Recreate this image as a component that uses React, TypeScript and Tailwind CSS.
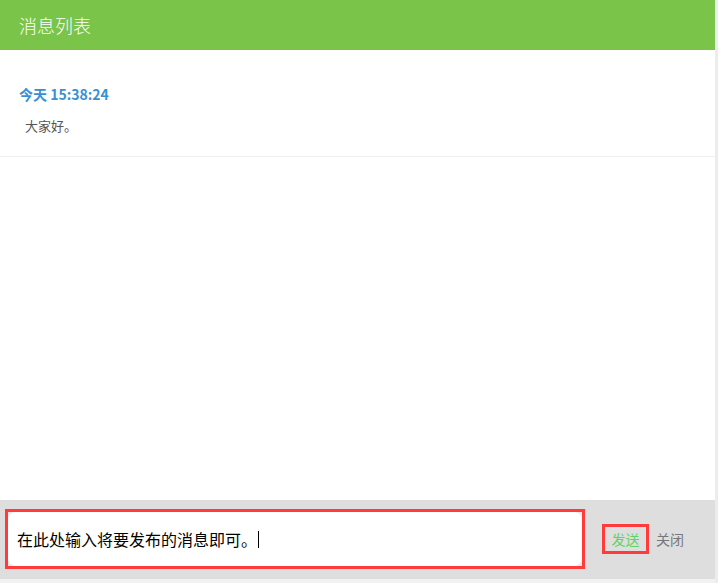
export default function App() {
  const font = { fontFamily: '"Noto Sans CJK SC", "Noto Sans", sans-serif' };
  return (
    <div className="w-[718px] h-[583px] flex bg-white" style={font}>
      <div className="w-[715px] h-full flex flex-col">
        <div className="h-[50px] bg-[#7bc44a] flex items-center pl-[19px]">
          <span className="text-[18px] font-light text-white leading-none">消息列表</span>
        </div>
        <div className="flex-1 bg-white">
          <div className="pt-[34px] pb-[20px] border-b border-[#efefef]">
            <div className="pl-[19px] text-[14px] leading-[20px] font-bold text-[#3a8fd2]">今天 15:38:24</div>
            <div className="pl-[25px] mt-[12px] text-[13px] leading-[20px] text-[#555]">大家好。</div>
          </div>
        </div>
        <div className="h-[79px] bg-[#dedede] flex items-start pt-[9px] pl-[5px]">
          <div className="w-[580px] h-[60px] border-[3px] border-[#ff3b3b] bg-[#e8e8e8]">
            <div className="w-full h-full bg-white rounded-[8px] flex items-center pl-[9px]">
              <span className="text-[16px] leading-none text-black">在此处输入将要发布的消息即可。</span>
              <span className="w-px h-[17px] bg-black ml-[1px]" />
            </div>
          </div>
          <div className="h-[60px] flex items-center ml-[17px]">
            <div className="w-[47px] h-[30px] border-[3px] border-[#ff3b3b] flex items-center justify-center text-[14px] text-[#5fd35f]">发送</div>
            <span className="ml-[7px] text-[14px] text-[#777]">关闭</span>
          </div>
        </div>
        <div className="h-[4px] bg-[#f2f2f2]" />
      </div>
      <div className="w-[3px] h-full bg-[#ececec]" />
    </div>
  );
}
